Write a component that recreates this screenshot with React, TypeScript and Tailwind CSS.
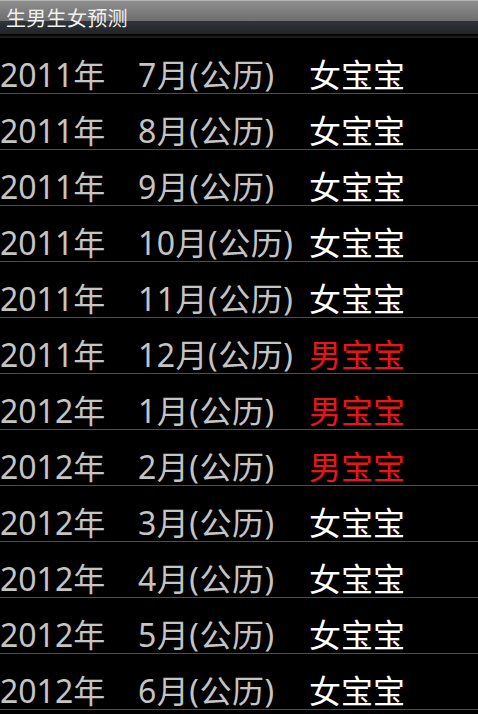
import type React from "react"

// 预测结果数据
const rows: { year: number; month: number; boy: boolean }[] = [
  { year: 2011, month: 7, boy: false },
  { year: 2011, month: 8, boy: false },
  { year: 2011, month: 9, boy: false },
  { year: 2011, month: 10, boy: false },
  { year: 2011, month: 11, boy: false },
  { year: 2011, month: 12, boy: true },
  { year: 2012, month: 1, boy: true },
  { year: 2012, month: 2, boy: true },
  { year: 2012, month: 3, boy: false },
  { year: 2012, month: 4, boy: false },
  { year: 2012, month: 5, boy: false },
  { year: 2012, month: 6, boy: false },
]

const font = { fontFamily: '"Noto Sans", "Noto Sans CJK SC", sans-serif' } as React.CSSProperties

const TitleBar = () => (
  <div className="h-[38px] flex flex-col">
    <div className="h-px bg-[#b4b4b4]" />
    <div className="h-[20px] bg-[linear-gradient(to_bottom,#8e8e8e,#6e6e6e)]" />
    <div className="h-[13px] bg-[linear-gradient(to_bottom,#31353a,#202326)]" />
    <div className="h-[2px] bg-[#050505]" />
    <div className="h-[2px] bg-[#1c1c1c]" />
    <div className="absolute top-0 left-0 h-[34px] flex items-center pl-[6px] pt-[4px] text-[20px] tracking-[0.3px] leading-none text-[#f0f0f0]">
      生男生女预测
    </div>
  </div>
)

export default function App() {
  return (
    <div className="relative min-h-screen bg-black overflow-hidden" style={font}>
      <TitleBar />
      <div className="flex flex-col">
        {rows.map((r, i) => (
          <div
            key={i}
            className="h-[56px] border-b border-[#4e4e4e] grid grid-cols-[138px_171px_1fr] items-end pb-[2px] text-[32px] leading-[32px] whitespace-nowrap"
          >
            <span className="text-[#c4c4c4]">{r.year}年</span>
            <span className="text-[#c4c4c4] tracking-[0.5px]">{r.month}月(公历)</span>
            <span className={r.boy ? "text-[#e8151b]" : "text-white"}>{r.boy ? "男宝宝" : "女宝宝"}</span>
          </div>
        ))}
      </div>
    </div>
  )
}
